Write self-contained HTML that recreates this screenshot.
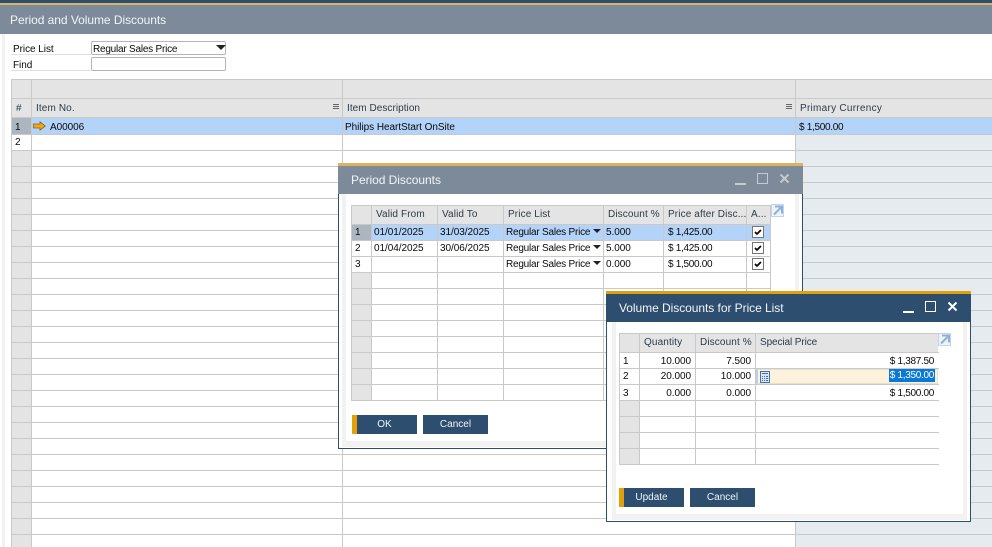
<!DOCTYPE html>
<html><head><meta charset="utf-8"><style>
html,body{margin:0;padding:0;width:992px;height:547px;overflow:hidden;background:#fff}
body{position:relative;font-family:"Liberation Sans",sans-serif;font-size:10px;color:#0a0a0a}
div,span,svg{position:absolute;box-sizing:border-box}
.t{white-space:nowrap;line-height:14px;letter-spacing:-.05px;margin-top:1px}
.h{color:#2b3b4b;letter-spacing:.12px}
.r{text-align:right}
.m{letter-spacing:-.3px}
.s{letter-spacing:-.22px}
.v{width:1px;background:#c9c9c9}
.hl{height:1px;background:#c9c9c9}
.ti{white-space:nowrap;color:#f2f5f8;font-size:12px;line-height:16px;letter-spacing:-.05px}
.btn{background:#2d4e6e;height:19px;width:65px;color:#f2f5f8;text-align:center;line-height:19px;font-size:10px}
.gold{background:#e3a008;left:0;top:0;width:5px;height:19px}
</style></head><body>
<!-- main window -->
<div style="left:0;top:0;width:992px;height:3px;background:#2d4e6e"></div>
<div style="left:0;top:3px;width:992px;height:2px;background:#d9b366"></div>
<div style="left:0;top:5px;width:992px;height:29px;background:#7c8a9a"></div>
<div class="ti" style="left:10px;top:12px">Period and Volume Discounts</div>
<div style="left:2px;top:34px;width:3px;height:513px;background:#f2f2f2"></div>
<div class="t" style="left:13px;top:42px">Price List</div>
<div class="hl" style="left:11px;top:54px;width:80px;background:#dfe3e6"></div>
<div class="t" style="left:13px;top:58px">Find</div>
<div class="hl" style="left:11px;top:70px;width:80px;background:#dfe3e6"></div>
<div style="left:91px;top:41px;width:135px;height:14px;border:1px solid #b5b5b5;border-radius:2px"></div>
<div class="t s" style="left:93px;top:42px">Regular Sales Price</div>
<div style="left:216px;top:45px;width:0;height:0;border-left:5px solid transparent;border-right:5px solid transparent;border-top:5px solid #222"></div>
<div style="left:91px;top:57px;width:135px;height:14px;border:1px solid #b5b5b5;border-radius:2px"></div>

<!-- main grid -->
<div style="left:11px;top:79px;width:981px;height:39px;background:#e4e4e4"></div>
<div style="left:11px;top:150px;width:20px;height:397px;background:#e4e4e4"></div>
<div style="left:796px;top:118px;width:196px;height:429px;background:#e6ebf0"></div>
<div style="left:11px;top:118px;width:981px;height:16px;background:#b3d3f8"></div>
<div style="left:11px;top:118px;width:20px;height:16px;background:#abb6c0"></div>
<div style="left:11px;top:119px;width:981px;height:428px;background-image:repeating-linear-gradient(to bottom,transparent 0,transparent 15px,#c9c9c9 15px,#c9c9c9 16px)"></div>
<div class="hl" style="left:11px;top:79px;width:981px"></div>
<div class="hl" style="left:11px;top:98px;width:981px"></div>
<div class="hl" style="left:11px;top:117px;width:981px;height:1px"></div>
<div class="v" style="left:11px;top:79px;height:468px"></div>
<div class="v" style="left:31px;top:79px;height:468px"></div>
<div class="v" style="left:342px;top:79px;height:468px"></div>
<div class="v" style="left:795px;top:79px;height:468px"></div>
<div class="t h" style="left:16px;top:101px">#</div>
<div class="t h" style="left:36px;top:101px">Item No.</div>
<div class="t h" style="left:347px;top:101px;letter-spacing:.05px">Item Description</div>
<div class="t h" style="left:800px;top:101px;letter-spacing:.27px">Primary Currency</div>
<div style="left:333px;top:104px;width:6px;height:5px;border-top:1px solid #666;border-bottom:1px solid #666"></div>
<div class="hl" style="left:333px;top:106px;width:6px;background:#666"></div>
<div style="left:786px;top:104px;width:6px;height:5px;border-top:1px solid #666;border-bottom:1px solid #666"></div>
<div class="hl" style="left:786px;top:106px;width:6px;background:#666"></div>
<div class="t" style="left:15px;top:120px">1</div>
<div class="t" style="left:15px;top:135px">2</div>
<svg style="left:33px;top:121px" width="13" height="10" viewBox="0 0 13 10"><path d="M.5 3H7V.8L12.3 5 7 9.2V7H.5z" fill="#f0a818" stroke="#8a6410" stroke-width=".8"/></svg>
<div class="t" style="left:50px;top:120px">A00006</div>
<div class="t" style="left:345px;top:120px">Philips HeartStart OnSite</div>
<div class="t m" style="left:799px;top:120px">$ 1,500.00</div>

<!-- Period dialog -->
<div style="left:338px;top:163px;width:465px;height:3px;background:#d9b366"></div>
<div style="left:338px;top:166px;width:465px;height:28px;background:#7c8a9a"></div>
<div style="left:338px;top:194px;width:465px;height:255px;background:#fff;border:1px solid #2d4e6e;border-top:0"></div>
<div style="left:342px;top:194px;width:4px;height:253px;background:#f2f2f2"></div>
<div style="left:795px;top:194px;width:4px;height:253px;background:#f2f2f2"></div>
<div style="left:342px;top:441px;width:457px;height:6px;background:#f2f2f2"></div>
<div class="ti" style="left:351px;top:172px">Period Discounts</div>
<div style="left:735px;top:183px;width:11px;height:2px;background:#c3cad2"></div>
<div style="left:757px;top:173px;width:11px;height:11px;border:1px solid #c3cad2"></div>
<svg style="left:779px;top:173px" width="11" height="11" viewBox="0 0 11 11"><path d="M1.500 1.500l8 8M9.500 1.500l-8 8" stroke="#c3cad2" stroke-width="2" fill="none"/></svg>

<div style="left:351px;top:205px;width:420px;height:19px;background:#e4e4e4"></div>
<div style="left:351px;top:272px;width:20px;height:129px;background:#e4e4e4"></div>
<div style="left:371px;top:224px;width:400px;height:16px;background:#b3d3f8"></div>
<div style="left:352px;top:225px;width:19px;height:15px;background:#abb6c0"></div>
<div class="hl" style="left:351px;top:205px;width:420px"></div>
<div class="hl" style="left:351px;top:224px;width:420px"></div>
<div class="hl" style="left:351px;top:240px;width:420px"></div>
<div class="hl" style="left:351px;top:256px;width:420px"></div>
<div class="hl" style="left:351px;top:272px;width:420px"></div>
<div class="hl" style="left:351px;top:288px;width:420px"></div>
<div class="hl" style="left:351px;top:304px;width:420px"></div>
<div class="hl" style="left:351px;top:320px;width:420px"></div>
<div class="hl" style="left:351px;top:336px;width:420px"></div>
<div class="hl" style="left:351px;top:352px;width:420px"></div>
<div class="hl" style="left:351px;top:368px;width:420px"></div>
<div class="hl" style="left:351px;top:384px;width:420px"></div>
<div class="hl" style="left:351px;top:400px;width:420px"></div>
<div class="v" style="left:351px;top:205px;height:196px"></div>
<div class="v" style="left:371px;top:205px;height:196px"></div>
<div class="v" style="left:437px;top:205px;height:196px"></div>
<div class="v" style="left:503px;top:205px;height:196px"></div>
<div class="v" style="left:603px;top:205px;height:196px"></div>
<div class="v" style="left:663px;top:205px;height:196px"></div>
<div class="v" style="left:746px;top:205px;height:196px"></div>
<div class="v" style="left:770px;top:205px;height:196px"></div>
<div class="t h" style="left:376px;top:207px">Valid From</div>
<div class="t h" style="left:442px;top:207px">Valid To</div>
<div class="t h" style="left:508px;top:207px">Price List</div>
<div class="t h" style="left:608px;top:207px">Discount %</div>
<div class="t h" style="left:668px;top:207px">Price after Disc...</div>
<div class="t h" style="left:751px;top:207px">A...</div>
<svg style="left:771px;top:204px" width="14" height="14" viewBox="0 0 14 14"><rect x=".5" y=".5" width="12" height="12" fill="#eef3fa" stroke="#c4d4e8"/><path d="M4 2.500h7v7M10.500 3L3 10.500" fill="none" stroke="#8fb0d8" stroke-width="2"/></svg>

<div class="t" style="left:355px;top:225px">1</div>
<div class="t" style="left:374px;top:225px">01/01/2025</div>
<div class="t" style="left:440px;top:225px">31/03/2025</div>
<div class="t s" style="left:506px;top:225px">Regular Sales Price</div>
<div class="t" style="left:606px;top:225px">5.000</div>
<div class="t m" style="left:668px;top:225px">$ 1,425.00</div>
<div class="t" style="left:355px;top:241px">2</div>
<div class="t" style="left:374px;top:241px">01/04/2025</div>
<div class="t" style="left:440px;top:241px">30/06/2025</div>
<div class="t s" style="left:506px;top:241px">Regular Sales Price</div>
<div class="t" style="left:606px;top:241px">5.000</div>
<div class="t m" style="left:668px;top:241px">$ 1,425.00</div>
<div class="t" style="left:355px;top:257px">3</div>
<div class="t s" style="left:506px;top:257px">Regular Sales Price</div>
<div class="t" style="left:606px;top:257px">0.000</div>
<div class="t m" style="left:668px;top:257px">$ 1,500.00</div>
<div style="left:593px;top:229px;width:0;height:0;border-left:4px solid transparent;border-right:4px solid transparent;border-top:4px solid #222"></div>
<div style="left:593px;top:245px;width:0;height:0;border-left:4px solid transparent;border-right:4px solid transparent;border-top:4px solid #222"></div>
<div style="left:593px;top:261px;width:0;height:0;border-left:4px solid transparent;border-right:4px solid transparent;border-top:4px solid #222"></div>
<svg style="left:752px;top:226px" width="13" height="13" viewBox="0 0 13 13"><rect x=".5" y=".5" width="11" height="11" fill="#fff" stroke="#777"/><path d="M3 6l2 2 4-4" fill="none" stroke="#000" stroke-width="1.600"/></svg>
<svg style="left:752px;top:242px" width="13" height="13" viewBox="0 0 13 13"><rect x=".5" y=".5" width="11" height="11" fill="#fff" stroke="#777"/><path d="M3 6l2 2 4-4" fill="none" stroke="#000" stroke-width="1.600"/></svg>
<svg style="left:752px;top:258px" width="13" height="13" viewBox="0 0 13 13"><rect x=".5" y=".5" width="11" height="11" fill="#fff" stroke="#777"/><path d="M3 6l2 2 4-4" fill="none" stroke="#000" stroke-width="1.600"/></svg>

<div class="btn" style="left:352px;top:415px"><div class="gold"></div>OK</div>
<div class="btn" style="left:423px;top:415px">Cancel</div>

<!-- Volume dialog -->
<div style="left:606px;top:291px;width:365px;height:3px;background:#e3a008"></div>
<div style="left:606px;top:294px;width:365px;height:28px;background:#2d4e6e"></div>
<div style="left:606px;top:322px;width:365px;height:200px;background:#fff;border:1px solid #2d4e6e;border-top:0"></div>
<div style="left:612px;top:322px;width:4px;height:198px;background:#f2f2f2"></div>
<div style="left:963px;top:322px;width:4px;height:198px;background:#f2f2f2"></div>
<div style="left:612px;top:514px;width:355px;height:6px;background:#f2f2f2"></div>
<div class="ti" style="left:619px;top:300px">Volume Discounts for Price List</div>
<div style="left:903px;top:311px;width:11px;height:2px;background:#fff"></div>
<div style="left:925px;top:301px;width:11px;height:11px;border:1px solid #fff"></div>
<svg style="left:947px;top:301px" width="11" height="11" viewBox="0 0 11 11"><path d="M1.500 1.500l8 8M9.500 1.500l-8 8" stroke="#fff" stroke-width="2" fill="none"/></svg>

<div style="left:619px;top:333px;width:319px;height:19px;background:#e4e4e4"></div>
<div style="left:619px;top:400px;width:20px;height:65px;background:#e4e4e4"></div>
<div class="hl" style="left:619px;top:333px;width:319px"></div>
<div class="hl" style="left:619px;top:352px;width:320px"></div>
<div class="hl" style="left:619px;top:368px;width:320px"></div>
<div class="hl" style="left:619px;top:384px;width:320px"></div>
<div class="hl" style="left:619px;top:400px;width:320px"></div>
<div class="hl" style="left:619px;top:416px;width:320px"></div>
<div class="hl" style="left:619px;top:432px;width:320px"></div>
<div class="hl" style="left:619px;top:448px;width:320px"></div>
<div class="hl" style="left:619px;top:464px;width:320px"></div>
<div class="v" style="left:619px;top:333px;height:132px"></div>
<div class="v" style="left:639px;top:333px;height:132px"></div>
<div class="v" style="left:695px;top:333px;height:132px"></div>
<div class="v" style="left:755px;top:333px;height:132px"></div>
<div class="t h" style="left:644px;top:335px">Quantity</div>
<div class="t h" style="left:700px;top:335px">Discount %</div>
<div class="t h" style="left:760px;top:335px;letter-spacing:-.1px">Special Price</div>
<svg style="left:938px;top:333px" width="14" height="14" viewBox="0 0 14 14"><rect x=".5" y=".5" width="12" height="12" fill="#eef3fa" stroke="#c4d4e8"/><path d="M4 2.500h7v7M10.500 3L3 10.500" fill="none" stroke="#8fb0d8" stroke-width="2"/></svg>

<div style="left:756px;top:369px;width:182px;height:15px;background:#fdf3dc;border:1px solid #e8e0cc;border-left:2px solid #b8d0e8"></div>
<svg style="left:760px;top:371px" width="10" height="12" viewBox="0 0 10 12"><rect x=".5" y=".5" width="9" height="11" fill="#dbe6f4" stroke="#3f74b0"/><path d="M2 2.500h6" stroke="#3f74b0"/><path d="M2 5.500h1m1 0h1m1 0h2M2 7.500h1m1 0h1m1 0h2M2 9.500h1m1 0h1m1 0h2" stroke="#3f74b0"/></svg>
<div style="left:889px;top:369px;width:46px;height:13px;background:#0a78d7"></div>

<div class="t" style="left:623px;top:354px">1</div>
<div class="t" style="left:623px;top:369px">2</div>
<div class="t" style="left:623px;top:386px">3</div>
<div class="t r" style="left:640px;top:354px;width:51px">10.000</div>
<div class="t r" style="left:640px;top:369px;width:51px">20.000</div>
<div class="t r" style="left:640px;top:386px;width:51px">0.000</div>
<div class="t r" style="left:696px;top:354px;width:55px">7.500</div>
<div class="t r" style="left:696px;top:369px;width:55px">10.000</div>
<div class="t r" style="left:696px;top:386px;width:55px">0.000</div>
<div class="t r m" style="left:840px;top:354px;width:94px">$ 1,387.50</div>
<div class="t r m" style="left:840px;top:368px;width:94px;color:#fff">$ 1,350.00</div>
<div class="t r m" style="left:840px;top:386px;width:94px">$ 1,500.00</div>

<div class="btn" style="left:619px;top:488px"><div class="gold"></div>Update</div>
<div class="btn" style="left:690px;top:488px">Cancel</div>
</body></html>
